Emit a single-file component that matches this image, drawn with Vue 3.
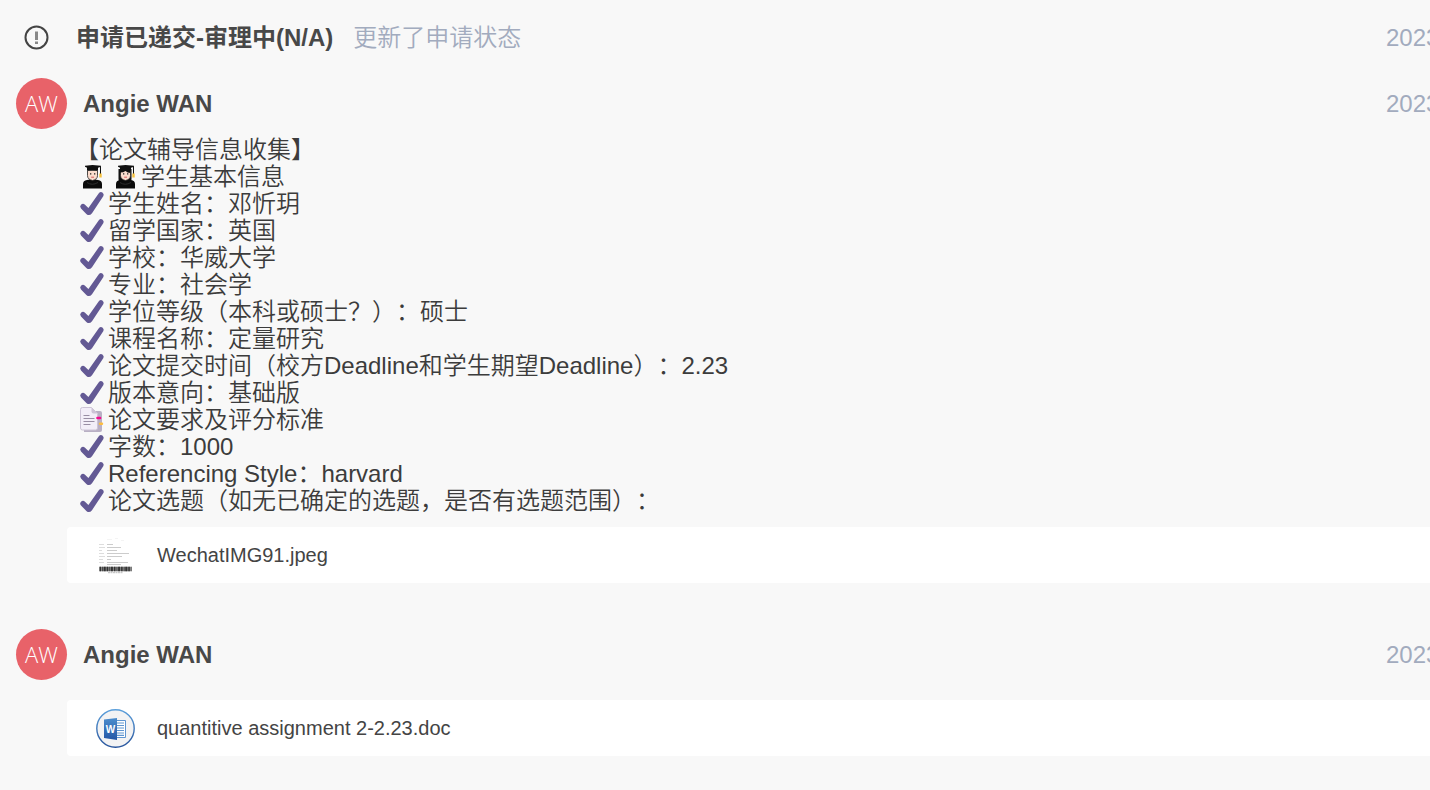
<template>
  <main class="timeline">
    <!-- 申请状态 -->
    <header class="status">
      <svg class="status-icon" viewBox="0 0 26 26" aria-hidden="true">
        <circle cx="12.500" cy="12.500" r="11" fill="none" stroke="#444" stroke-width="2" />
        <path d="M11 6.500h3v8.500h-3zM11 16.500h3v2.400h-3z" fill="#888" />
      </svg>
      <h1 class="status-title">申请已递交-审理中(N/A)</h1>
      <span class="status-text">更新了申请状态</span>
      <time class="date">2023</time>
    </header>

    <!-- 留言列表 -->
    <article v-for="(item, index) in comments" :key="index" class="comment">
      <div class="comment-head">
        <span class="avatar">AW</span>
        <h2 class="name">{{ item.name }}</h2>
        <time class="date">2023</time>
      </div>

      <div class="comment-body">
        <p v-for="(line, i) in item.lines" :key="i" class="line">
          <template v-for="icon in line.icons" :key="icon">
            <svg v-if="icon === 'check'" class="emoji" viewBox="0 0 33 27">
              <path d="M6 14.700q2-1.800 4 0l3.400 3.400L24 3q1.400-1.500 3.400-.6 2 1.500 1 3.600L17 23.200q-2.600 3.200-5.400 1L6 18.500q-1.700-2 0-3.800z" fill="#635994" />
            </svg>
            <svg v-else-if="icon === 'doc'" class="emoji" viewBox="0 0 33 27">
              <path d="M9 5h16q2 0 2 2v17q0 2-2 2H9z" fill="#b9b0c4" />
              <path d="M5.500 3.500q0-2 2-2h9l6 6v14.500q0 2-2 2h-13q-2 0-2-2z" fill="#f3eef8" stroke="#cdc4d6" />
              <path d="M16.500 1.500v4q0 2 2 2h4z" fill="#cdc4d6" />
              <path d="M8.500 9.500h6M8.500 12.500h11M8.500 15.500h11M8.500 18.500h7" stroke="#998ea4" />
              <path d="M22.500 12h2.500" stroke="#f70a8d" stroke-width="2.600" stroke-linecap="round" />
              <path d="M25 17.700h2" stroke="#fcbd3f" stroke-width="2.400" stroke-linecap="round" />
            </svg>
            <svg v-else class="emoji" viewBox="0 0 33 27">
              <path v-if="icon === 'woman'" d="M10.500 6h13v10q0 3-3 3h-7q-3 0-3-3z" fill="#111" />
              <path d="M8 25.500v-4.500q0-3.500 4-4l3-.5h5l3 .5q4 .5 4 4v4.500z" fill="#0b0b0b" />
              <path d="M12.500 7.500h10v5q0 4-5 5-5-1-5-5z" fill="#fbdccd" stroke="#222" stroke-width=".8" />
              <path v-if="icon === 'woman'" d="M12 9.500V7h10.500v3q-3 0-5-2-2 1.500-5.500 1.500z" fill="#111" />
              <path d="M15 10.900h1.300M19 10.900h1.300" stroke="#222" stroke-width="1.200" />
              <path d="M16.200 14.200h2.800" stroke="#d85d5d" />
              <path d="M10 2.800l7.500-.8 8.500.8v1l-3 1V7.500q-5.500-1-11 0V4.800l-2-1z" fill="#111" />
              <path d="M25.500 3.500v8" stroke="#111" />
              <path d="M25.500 10.500v4" stroke="#f6c13b" stroke-width="2.400" />
              <path d="M12 19.500q5 3.500 11 0" fill="none" stroke="#333" stroke-width=".8" />
            </svg>
          </template>
          <span>{{ line.text }}</span>
        </p>
      </div>

      <!-- 附件 -->
      <div class="file">
        <svg v-if="item.type === 'image'" class="file-icon" viewBox="0 0 39 39" aria-hidden="true">
          <path d="M11 3.500h5M19 2.500h3M25 4.500h3" stroke="#f4f4f4" />
          <path d="M3 8.500h5M3 11.500h6M3 14.500h3M3 17.500h5M3 20.500h6M3 23.500h4M3 26.500h5" stroke="#ddd" />
          <path d="M11 8.500h6M11 11.500h14M11 14.500h10M11 17.500h22M11 20.500h15M11 23.500h4M11 26.500h21M11 28.500h14" stroke="#ccc" />
          <path d="M3.500 33h32" stroke="#888" stroke-width="4.500" />
          <path d="M3.500 33h32" stroke="#333" stroke-width="4.500" stroke-dasharray="1.500 1.200 .7 .8 2 1" />
          <path d="M12 36.700h15" stroke="#bbb" stroke-dasharray="2 .5" />
        </svg>
        <svg v-else class="file-icon" viewBox="0 0 39 39" aria-hidden="true">
          <defs>
            <linearGradient id="ring" x1="0" y1="0" x2="0" y2="1">
              <stop offset="0" stop-color="#5b9fdb" />
              <stop offset="1" stop-color="#27539b" />
            </linearGradient>
            <linearGradient id="cover" x1="0" y1="0" x2="0" y2="1">
              <stop offset="0" stop-color="#4c8dcd" />
              <stop offset="1" stop-color="#2457a6" />
            </linearGradient>
          </defs>
          <circle cx="19.500" cy="19.500" r="18.700" fill="#f3f3f4" stroke="url(#ring)" stroke-width="1.400" />
          <path d="M20 11.500h9.500v17H20z" fill="#fff" stroke="#5f95d0" />
          <path d="M21 14h7M21 16.500h7M21 19h7M21 21.500h7M21 24h7M21 26.300h7" stroke="#5f95d0" stroke-width="1.200" />
          <path d="M8 10.500L21 9v22L8 29z" fill="url(#cover)" />
          <text class="cover-letter" x="14.500" y="23.500" text-anchor="middle">W</text>
        </svg>
        <a class="file-name" href="#">{{ item.file }}</a>
      </div>
    </article>
  </main>
</template>

<script setup>
const check = ['check']

// 留言数据
const comments = [
  {
    name: 'Angie WAN',
    type: 'image',
    file: 'WechatIMG91.jpeg',
    lines: [
      { icons: [], text: '【论文辅导信息收集】' },
      { icons: ['man', 'woman'], text: '学生基本信息' },
      { icons: check, text: '学生姓名：邓忻玥' },
      { icons: check, text: '留学国家：英国' },
      { icons: check, text: '学校：华威大学' },
      { icons: check, text: '专业：社会学' },
      { icons: check, text: '学位等级（本科或硕士？）：硕士' },
      { icons: check, text: '课程名称：定量研究' },
      { icons: check, text: '论文提交时间（校方Deadline和学生期望Deadline）：2.23' },
      { icons: check, text: '版本意向：基础版' },
      { icons: ['doc'], text: '论文要求及评分标准' },
      { icons: check, text: '字数：1000' },
      { icons: check, text: 'Referencing Style：harvard' },
      { icons: check, text: '论文选题（如无已确定的选题，是否有选题范围）：' }
    ]
  },
  {
    name: 'Angie WAN',
    type: 'word',
    file: 'quantitive assignment 2-2.23.doc',
    lines: []
  }
]
</script>

<style>
body {
  background: #f8f8f8;
}
</style>

<style scoped>
.timeline {
  padding: 20px 0 32px;
  font-family: 'Liberation Sans', 'Noto Sans CJK SC', sans-serif;
  font-size: 24px;
  font-weight: 350;
  color: #3c3c3c;
  overflow: hidden;
  text-spacing-trim: space-all; /* 标点保持全角宽度 */
}

/* 状态栏 */
.status {
  display: flex;
  align-items: center;
  height: 36px;
  padding-left: 24px;
}
.status-icon {
  width: 26px;
  height: 26px;
  margin-right: 26px;
  flex: none;
}
.status-title,
.name {
  margin: 0;
  font-size: 24px;
  line-height: 36px;
  font-weight: bold;
  color: #484848;
  white-space: nowrap;
}
.status-text {
  margin-left: 20px;
  line-height: 36px;
  color: #a2abbe;
  white-space: nowrap;
}
.date {
  flex: 0 0 44px; /* 超出部分被裁掉 */
  margin-left: auto;
  line-height: 36px;
  color: #a2abbe;
  overflow: hidden;
}

/* 留言 */
.comment {
  margin-top: 46px;
}
.status + .comment {
  margin-top: 22px;
}
.comment-head {
  display: flex;
  align-items: center;
  padding-left: 16px;
}
.avatar {
  width: 51px;
  height: 51px;
  margin-right: 16px;
  border-radius: 50%;
  background: #e86269;
  color: #fff;
  font-family: 'Open Sans', sans-serif;
  font-size: 22px;
  font-weight: 300;
  line-height: 51px;
  text-align: center;
}
.comment-body {
  padding: 7px 0 13px 75px;
}
.line {
  display: flex;
  margin: 0;
  line-height: 27px;
}
.emoji {
  width: 33px;
  height: 27px;
  flex: none;
}

/* 附件 */
.file {
  display: flex;
  align-items: center;
  height: 56px;
  margin-left: 67px;
  padding-left: 29px;
  border-radius: 4px 0 0 4px;
  background: #fff;
}
.file-icon {
  width: 39px;
  height: 39px;
  margin-right: 22px;
}
.cover-letter {
  font-size: 10px;
  font-weight: bold;
  fill: #fff;
}
.file-name {
  font-size: 20px;
  color: #444;
  text-decoration: none;
}
</style>
